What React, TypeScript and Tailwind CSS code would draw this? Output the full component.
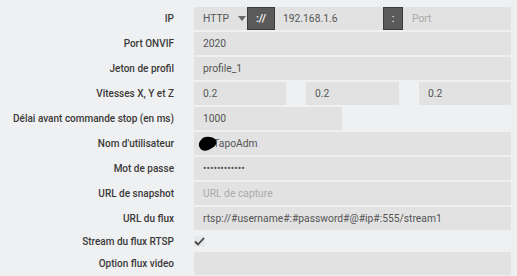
import React from "react";

const font = { fontFamily: "Roboto, 'Liberation Sans', sans-serif" };

function Label({ children }: { children: React.ReactNode }) {
  return (
    <div className="w-[174px] shrink-0 text-right text-[10px] font-medium text-[#3a3a3a] leading-[23px] whitespace-nowrap">
      {children}
    </div>
  );
}

function Box({ children, className = "" }: { children?: React.ReactNode; className?: string }) {
  return (
    <div className={"h-[23px] bg-[#e1e2e1] text-[10.3px] text-[#555] leading-[23px] px-[9px] whitespace-nowrap overflow-hidden " + className}>
      {children}
    </div>
  );
}

function Row({ label, children, h = "h-[23px]" }: { label: string; children: React.ReactNode; h?: string }) {
  return (
    <div className={"flex items-center gap-[20px] mb-[2px] " + h}>
      <Label>{label}</Label>
      {children}
    </div>
  );
}

export default function App() {
  return (
    <div className="w-[517px] h-[276px] bg-[#eff0f1] pt-[7px] overflow-hidden" style={font}>
      <Row label="IP">
        <div className="flex w-[317px] h-[23px]">
          <div className="w-[53px] h-[23px] bg-[#e1e2e1] text-[10.3px] text-[#555] leading-[23px] pl-[9px] flex items-center gap-[9px]">
            <span>HTTP</span>
            <svg width="8" height="5" viewBox="0 0 8 5"><path d="M0 0h8L4 5z" fill="#666" /></svg>
          </div>
          <div className="w-[28px] h-[23px] bg-[#5a5a5a] border border-[#3a3a3a] text-white text-[11px] leading-[21px] text-center font-medium">://</div>
          <Box className="w-[108px] pl-[8px]">192.168.1.6</Box>
          <div className="w-[20px] h-[23px] bg-[#5a5a5a] border border-[#3a3a3a] text-white text-[11px] leading-[21px] text-center">:</div>
          <Box className="flex-1 text-[#aaa]">Port</Box>
        </div>
      </Row>
      <Row label="Port ONVIF"><Box className="w-[317px]">2020</Box></Row>
      <Row label="Jeton de profil"><Box className="w-[317px]">profile_1</Box></Row>
      <Row label="Vitesses X, Y et Z">
        <div className="flex gap-[20px] w-[317px]">
          <Box className="w-[92px]">0.2</Box>
          <Box className="w-[93px]">0.2</Box>
          <Box className="w-[92px]">0.2</Box>
        </div>
      </Row>
      <Row label="Délai avant commande stop (en ms)"><Box className="w-[148px]">1000</Box></Row>
      <Row label="Nom d'utilisateur">
        <div className="relative">
          <Box className="w-[317px]">&nbsp;&nbsp;&nbsp;&nbsp;TapoAdm</Box>
          <svg className="absolute left-[4px] top-[4px]" width="20" height="16" viewBox="0 0 20 16">
            <path d="M3 4 C5 0, 13 0, 17 3 C20 6, 18 10, 14 12 C10 15, 4 16, 2 12 C0 9, 1 6, 3 4 Z" fill="#000" />
          </svg>
        </div>
      </Row>
      <Row label="Mot de passe"><Box className="w-[317px]">••••••••••••</Box></Row>
      <Row label="URL de snapshot"><Box className="w-[317px] text-[#aaa]">URL de capture</Box></Row>
      <Row label="URL du flux"><Box className="w-[317px]">rtsp://#username#:#password#@#ip#:555/stream1</Box></Row>
      <Row label="Stream du flux RTSP" h="h-[18px]">
        <div className="w-[11px] h-[11px] flex items-center justify-center bg-[#e6e7e8]">
          <svg width="11" height="9" viewBox="0 0 11 9"><path d="M1 4.5 L4 7.5 L10 1" stroke="#444" strokeWidth="1.8" fill="none" /></svg>
        </div>
      </Row>
      <Row label="Option flux video"><Box className="w-[317px]"></Box></Row>
    </div>
  );
}
